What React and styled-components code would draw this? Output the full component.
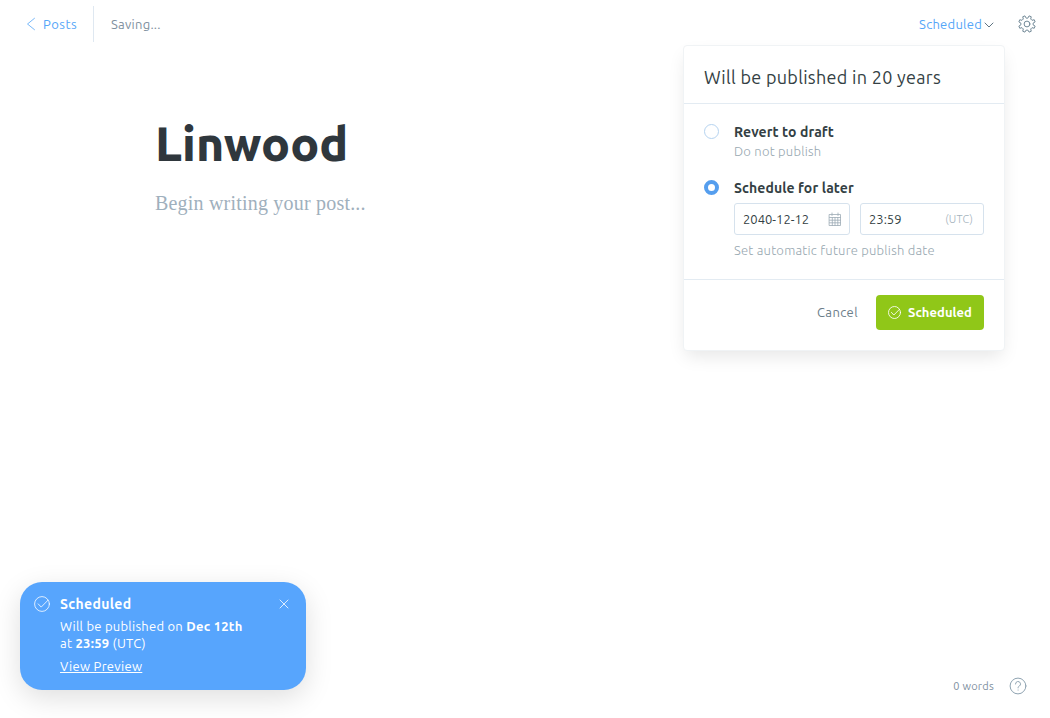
import React from 'react';
import styled, { createGlobalStyle, css } from 'styled-components';

const Global = createGlobalStyle`
  *, *::before, *::after { box-sizing: border-box; }
  html, body { margin: 0; height: 100%; }
  body {
    background: #fff;
    color: #343f44;
    font-family: Ubuntu, "Noto Sans", "Open Sans", sans-serif;
    font-size: 13px;
    letter-spacing: 0.25px;
    overflow: hidden;
  }
  button, input { font: inherit; letter-spacing: inherit; color: inherit; }
`;

const Page = styled.div`
  position: relative;
  display: flex;
  flex-direction: column;
  height: 718px;
`;

const Header = styled.header`
  display: flex;
  align-items: center;
  height: 48px;
  padding: 0 14px 0 26px;
  white-space: nowrap;
`;

const BackLink = styled.a`
  display: flex;
  align-items: center;
  height: 36px;
  width: 68px;
  gap: 7px;
  border-right: 1px solid #dfe8f1;
  color: #55a6f8;
  letter-spacing: 0.5px;
`;

const Status = styled.span`
  margin-left: 17px;
  color: #7f919f;
`;

const Actions = styled.div`
  display: flex;
  align-items: center;
  margin-left: auto;
`;

const PublishTrigger = styled.button`
  display: flex;
  align-items: center;
  gap: 2px;
  padding: 0;
  margin-right: 24px;
  border: 0;
  background: none;
  color: #55a6f8;
`;

const Editor = styled.main`
  padding: 62px 0 0 155px;
`;

const Title = styled.h1`
  margin: 0;
  color: #2f373d;
  font-size: 48px;
  font-weight: 800;
  line-height: 66px;
  letter-spacing: 0.05px;
`;

const Placeholder = styled.p`
  margin: 11px 0 0;
  color: #9fb0bd;
  font-family: "Liberation Serif", serif;
  font-size: 20px;
  line-height: 32px;
  letter-spacing: 0.2px;
`;

const Footer = styled.footer`
  display: flex;
  align-items: center;
  justify-content: flex-end;
  gap: 15px;
  margin-top: auto;
  padding: 0 23px 23px 0;
  color: #7f919f;
  font-size: 11px;
`;

const Menu = styled.section`
  position: absolute;
  top: 45px;
  left: 683px;
  width: 322px;
  height: 306px;
  border: 1px solid #f0f3f5;
  border-radius: 4px;
  background: #fff;
  box-shadow: 0 8px 18px -3px rgba(0, 0, 0, 0.1);
  white-space: nowrap;
`;

const MenuHead = styled.h2`
  margin: 0;
  height: 58px;
  padding: 0 20px;
  border-bottom: 1px solid #e3ebf2;
  font-size: 18px;
  font-weight: 400;
  line-height: 63px;
  letter-spacing: 0.3px;
`;

const MenuBody = styled.div`
  height: 176px;
  padding: 18px 20px 0;
  border-bottom: 1px solid #e3ebf2;
`;

const Option = styled.div`
  display: grid;
  grid-template-columns: 15px 1fr;
  column-gap: 15px;
  margin-bottom: 17px;
`;

const Radio = styled.span`
  width: 15px;
  height: 15px;
  margin-top: 2px;
  border: 1px solid #b5d3f0;
  border-radius: 50%;
  ${(p) => p.$checked && css`
    border: 4px solid #559eee;
  `}
`;

const OptionName = styled.div`
  font-size: 14px;
  font-weight: 600;
  line-height: 20px;
  letter-spacing: 0.09px;
`;

const Hint = styled.div`
  color: #97a7b0;
  font-weight: 300;
  line-height: 19px;
  letter-spacing: 0.23px;
`;

const Fields = styled.div`
  display: flex;
  gap: 10px;
  margin: 5px 0 6px;
  letter-spacing: 0;
`;

const Field = styled.label`
  display: flex;
  align-items: center;
  justify-content: space-between;
  width: ${(p) => p.$width};
  height: 32px;
  padding: 0 ${(p) => p.$end} 0 8px;
  border: 1px solid #d6e2ed;
  border-radius: 3px;
  font-size: 13px;
`;

const Zone = styled.span`
  color: #a4b2bc;
  font-size: 11px;
  font-weight: 300;
  letter-spacing: 0.2px;
`;

const MenuFoot = styled.div`
  display: flex;
  align-items: center;
  justify-content: flex-end;
  gap: 18px;
  padding: 15px 20px;
`;

const Cancel = styled.button`
  padding: 0 0 2px;
  border: 0;
  background: none;
  color: #6b7d89;
  letter-spacing: 0.4px;
`;

const Confirm = styled.button`
  display: flex;
  align-items: center;
  gap: 7px;
  width: 108px;
  height: 35px;
  padding: 0 0 0 12px;
  border: 0;
  border-radius: 4px;
  background: #90c718;
  color: #fff;
  font-weight: 600;
  line-height: 15px;
  letter-spacing: 0.05px;
`;

const Toast = styled.aside`
  position: absolute;
  top: 582px;
  left: 20px;
  display: flex;
  width: 286px;
  height: 108px;
  padding: 12px 17px 0 14px;
  border-radius: 22px;
  background: #57a5fd;
  box-shadow: 0 8px 28px rgba(0, 0, 0, 0.13);
  color: #fff;
  white-space: nowrap;
`;

const ToastText = styled.div`
  flex: 1;
  margin-left: 10px;
`;

const ToastTitle = styled.div`
  margin-bottom: 4px;
  font-size: 14px;
  font-weight: 700;
  line-height: 20px;
  letter-spacing: 0.35px;
`;

const ToastLine = styled.div`
  line-height: 17px;
`;

const ToastLink = styled.a`
  display: inline-block;
  margin-top: 6px;
  line-height: 17px;
  letter-spacing: 0.3px;
  text-decoration: underline;
`;

const Svg = styled.svg`
  flex: none;
  display: block;
  fill: none;
  stroke: ${(p) => p.$color || 'currentColor'};
  stroke-width: ${(p) => p.$weight || 1};
  stroke-linecap: round;
  stroke-linejoin: round;
  margin-top: ${(p) => p.$top || 0};
`;

const CheckCircle = ({ size, top }) => (
  <Svg width={size} height={size} viewBox="0 0 16 16" $top={top} $weight={size < 16 ? 1.05 : 0.8}>
    <circle cx="8" cy="8" r="7.4" />
    <path d="M4.2 7.9l3 3.2 6.8-6.9" />
  </Svg>
);

const gearPath = (() => {
  const pts = [];
  for (let i = 0; i < 8; i += 1) {
    [[-14, 6.2], [-8, 8.4], [8, 8.4], [14, 6.2]].forEach(([d, r]) => {
      const a = ((i * 45 + 22.5 + d) * Math.PI) / 180;
      pts.push(`${(9 + r * Math.sin(a)).toFixed(2)} ${(9 - r * Math.cos(a)).toFixed(2)}`);
    });
  }
  return `M${pts.join('L')}Z`;
})();

export default function App() {
  return (
    <Page>
      <Global />
      <Header>
        <BackLink>
          <Svg width="10" height="14" viewBox="0 0 10 14" $weight="0.8"><path d="M8.5 1.3L1.5 7l7 5.7" /></Svg>
          Posts
        </BackLink>
        <Status>Saving...</Status>
        <Actions>
          <PublishTrigger>
            Scheduled
            <Svg width="10" height="6" viewBox="0 0 10 6" $color="#5f7482" $top="1px"><path d="M1 1l4 4 4-4" /></Svg>
          </PublishTrigger>
          <Svg width="18" height="18" viewBox="0 0 18 18" $color="#738a98">
            <path d={gearPath} />
            <circle cx="9" cy="9" r="2.9" />
          </Svg>
        </Actions>
      </Header>

      <Editor>
        <Title>Linwood</Title>
        <Placeholder>Begin writing your post...</Placeholder>
      </Editor>

      <Footer>
        <span>0 words</span>
        <Svg width="18" height="18" viewBox="0 0 18 18" $color="#8fa3b1">
          <circle cx="9" cy="9" r="7.9" />
          <path d="M6.5 7a2.5 2.5 0 1 1 3.7 2.2c-.8.4-1.1.8-1.1 1.7M9.1 13v.1" />
        </Svg>
      </Footer>

      <Menu>
        <MenuHead>Will be published in 20 years</MenuHead>
        <MenuBody>
          <Option>
            <Radio />
            <div>
              <OptionName>Revert to draft</OptionName>
              <Hint>Do not publish</Hint>
            </div>
          </Option>
          <Option>
            <Radio $checked />
            <div>
              <OptionName>Schedule for later</OptionName>
              <Fields>
                <Field $width="116px" $end="7px">
                  2040-12-12
                  <Svg width="14" height="14" viewBox="0 0 14 14" $color="#9dabb5" $weight="0.8">
                    <path d="M1.5 2.5h11v11h-11zM1.5 5.5h11M1.5 8.2h11M1.5 10.8h11M4.3 5.5v8M7 5.5v8M9.8 5.5v8M4 1v2.5M10 1v2.5" />
                  </Svg>
                </Field>
                <Field $width="124px" $end="10px">
                  23:59
                  <Zone>(UTC)</Zone>
                </Field>
              </Fields>
              <Hint>Set automatic future publish date</Hint>
            </div>
          </Option>
        </MenuBody>
        <MenuFoot>
          <Cancel>Cancel</Cancel>
          <Confirm>
            <CheckCircle size={13} />
            <span>Scheduled</span>
          </Confirm>
        </MenuFoot>
      </Menu>

      <Toast>
        <CheckCircle size={16} top="2px" />
        <ToastText>
          <ToastTitle>Scheduled</ToastTitle>
          <ToastLine>Will be published on <b>Dec 12th</b></ToastLine>
          <ToastLine>at <b>23:59</b> (UTC)</ToastLine>
          <ToastLink>View Preview</ToastLink>
        </ToastText>
        <Svg width="10" height="10" viewBox="0 0 10 10" $top="5px" $weight="0.8"><path d="M1 1l8 8M9 1L1 9" /></Svg>
      </Toast>
    </Page>
  );
}
